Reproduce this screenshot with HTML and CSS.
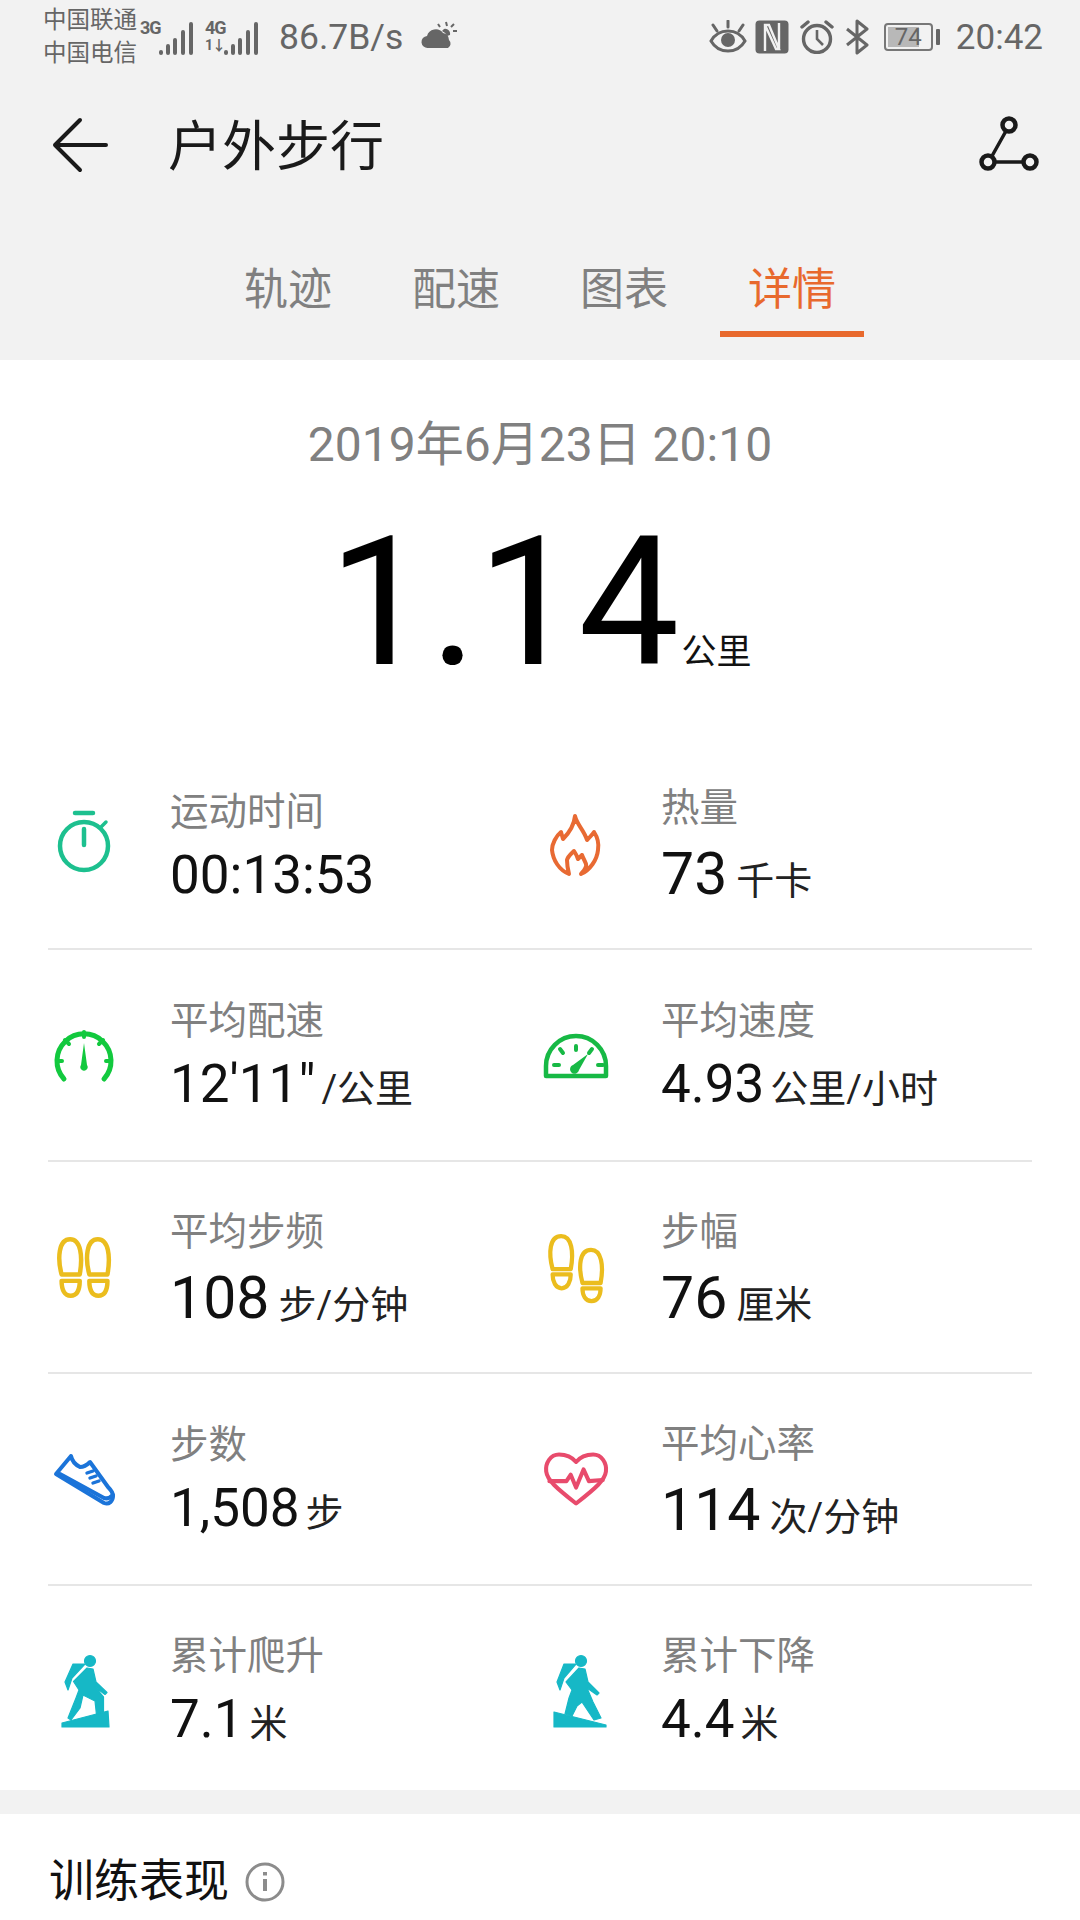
FILE: index.html
```html
<!DOCTYPE html>
<html lang="zh-CN">
<head>
    <meta charset="UTF-8">
    <meta name="viewport" content="width=device-width, initial-scale=1.0">
    <title>户外步行</title>
    <link rel="stylesheet" href="styles.css">
</head>
<body>

<div class="app">
    <div class="header">
        <div class="statusbar">
            <div class="status-left">
                <div class="carriers">
                    <span>中国联通</span>
                    <span>中国电信</span>
                </div>
                <div class="net net-3g">
                    <span class="net-label">3G</span>
                </div>
                <svg class="signal" width="36" height="36" viewBox="0 0 36 36" fill="none" stroke="#666" stroke-width="4" stroke-linecap="round">
                    <path d="M3 31v1M10 25v7M17 19v13M25 11v21M33 3v29"/>
                </svg>
                <div class="net net-4g">
                    <span class="net-label">4G</span>
                    <span class="net-label net-sub">1↓</span>
                </div>
                <svg class="signal" width="36" height="36" viewBox="0 0 36 36" fill="none" stroke="#666" stroke-width="4" stroke-linecap="round">
                    <path d="M3 31v1M10 25v7M17 19v13M25 11v21M33 3v29"/>
                </svg>
                <span class="speed">86.7B/s</span>
                <svg class="weather" width="36" height="32" viewBox="0 0 36 32">
                    <path d="M7 27a6 6 0 0 1-1-12 9 9 0 0 1 16-3 7 7 0 0 1 6 7 5 5 0 0 1-1 8z" fill="#666"/>
                    <path d="M23 8a5 5 0 0 1 6 6l-3 1a8 8 0 0 0-5-5z" fill="#666"/>
                    <path d="M25 1l1 4M33 3l-3 3M36 10h-4M17 3l2 3" stroke="#666" stroke-width="2" fill="none"/>
                </svg>
            </div>
            <div class="status-right">
                <svg class="eye" width="38" height="34" viewBox="0 0 38 34" fill="none" stroke="#666">
                    <path d="M2 21c4-7 10-10 17-10s13 3 17 10c-4 7-10 10-17 10S6 28 2 21z" stroke-width="3"/>
                    <circle cx="19" cy="20" r="7" fill="#666" stroke="none"/>
                    <path d="M19 1v6M4 5l4 6M34 5l-4 6" stroke-width="3" stroke-linecap="round"/>
                </svg>
                <svg width="34" height="34" viewBox="0 0 34 34">
                    <rect x="0.5" y="0.5" width="33" height="33" rx="4" fill="#666"/>
                    <path d="M10 31V5h4l10 24h-3L10 5M24 3v26" fill="none" stroke="#f2f2f2" stroke-width="2.4"/>
                </svg>
                <svg width="34" height="34" viewBox="0 0 34 34" fill="none" stroke="#666" stroke-width="3.4">
                    <circle cx="17" cy="19" r="13.5"/>
                    <path d="M17 10v9l6 6" stroke-width="2.6"/>
                    <path d="M2 7l6-5M32 7l-6-5" stroke-linecap="round"/>
                </svg>
                <svg width="24" height="36" viewBox="0 0 24 36" fill="none" stroke="#666" stroke-width="3" stroke-linejoin="round">
                    <path d="M2 10l20 16-10 8V2l10 8L2 26"/>
                </svg>
                <div class="battery">
                    <div class="battery-body">74</div>
                    <div class="battery-cap"></div>
                </div>
                <span class="clock">20:42</span>
            </div>
        </div>

        <div class="toolbar">
            <svg class="back" width="56" height="56" viewBox="0 0 56 56" fill="none" stroke="#1a1a1a" stroke-width="4" stroke-linecap="round" stroke-linejoin="round">
                <path d="M28 3L3 28l25 25M3 28h51"/>
            </svg>
            <h1 class="title">户外步行</h1>
            <svg class="route" width="62" height="58" viewBox="0 0 62 58" fill="none" stroke="#1a1a1a" stroke-width="4.5">
                <circle cx="30" cy="9" r="6.5"/>
                <circle cx="9" cy="46" r="6.5"/>
                <circle cx="51" cy="46" r="6.5"/>
                <path d="M27 15L13 40M16 46h28" stroke-width="3.5"/>
            </svg>
        </div>

        <div class="tabs">
            <div class="tab">轨迹</div>
            <div class="tab">配速</div>
            <div class="tab">图表</div>
            <div class="tab active">详情</div>
        </div>
    </div>

    <div class="summary">
        <div class="date">2019年6月23日 20:10</div>
        <div class="distance">
            <span class="distance-num">1.14</span>
            <span class="distance-unit">公里</span>
        </div>
    </div>

    <div class="metrics">
        <div class="row">
            <div class="cell">
                <svg class="icon" viewBox="-1 -2 80 80" fill="none" stroke="#1dc08f" stroke-width="4.5">
                    <circle cx="39" cy="41" r="24"/>
                    <path d="M30 8h18M39 24v16" stroke-linecap="round"/>
                    <path d="M56 22l5-5" stroke-linecap="round" stroke-width="3.5"/>
                </svg>
                <div class="text">
                    <div class="label">运动时间</div>
                    <div class="value">00:13:53</div>
                </div>
            </div>
            <div class="cell">
                <svg class="icon" viewBox="1 -3 80 80" fill="none" stroke="#e86a33" stroke-width="4" stroke-linejoin="round">
                    <path d="M41 10C43 19 50 24 53 34C56 31 58 29 60 26C64 32 65 38 64 44C63 54 56 64 47 68C51 63 53 61 52 58C51 55 49 52 48 49L44 53C43 50 42 48 40 45C37 48 34 50 33 54C33 60 34 64 35 68C25 64 19 54 18 44C18 38 22 30 27 26L29 33C34 28 40 20 41 10Z"/>
                </svg>
                <div class="text">
                    <div class="label">热量</div>
                    <div class="value value-lg">73<span class="unit">千卡</span></div>
                </div>
            </div>
        </div>

        <div class="row">
            <div class="cell">
                <svg class="icon" viewBox="0 0 80 80" fill="none" stroke="#12c93e" stroke-width="5" stroke-linecap="round">
                    <path d="M20 64A27 27 0 1 1 60 64"/>
                    <path d="M40 17v5M21 25l4 4M59 25l-4 4M13 46h5M62 46h5" stroke-width="4"/>
                    <path d="M40 28l-3 22a3.6 3.6 0 1 0 6 0z" fill="#12c93e" stroke="none"/>
                </svg>
                <div class="text">
                    <div class="label">平均配速</div>
                    <div class="value">12'11"<span class="unit">/公里</span></div>
                </div>
            </div>
            <div class="cell">
                <svg class="icon" viewBox="0 -1 80 80" fill="none" stroke="#17b945" stroke-width="4.5" stroke-linecap="round">
                    <path d="M11 60V50A30 30 0 0 1 71 50V60z" stroke-linejoin="round"/>
                    <path d="M41 30v4M25 33l3 4M57 33l-3 4M19 49h5M63 49h5" stroke-width="4"/>
                    <path d="M53 38L38 49a4.5 4.5 0 1 0 6 5z" fill="#17b945" stroke="none"/>
                </svg>
                <div class="text">
                    <div class="label">平均速度</div>
                    <div class="value">4.93<span class="unit">公里/小时</span></div>
                </div>
            </div>
        </div>

        <div class="row">
            <div class="cell">
                <svg class="icon" viewBox="2.5 2.5 75 75" fill="none" stroke="#ebbd1e" stroke-width="4.2" stroke-linejoin="round">
                    <path d="M19 47C15 32 16 14 27 14C37 14 39 30 36 47Z"/>
                    <path d="M19 53H36C36 62 33 67 27.5 67C22 67 19 62 19 53Z"/>
                    <path d="M45 47C41 32 42 14 53 14C63 14 65 30 62 47Z"/>
                    <path d="M45 53H62C62 62 59 67 53.5 67C48 67 45 62 45 53Z"/>
                </svg>
                <div class="text">
                    <div class="label">平均步频</div>
                    <div class="value value-lg">108<span class="unit">步/分钟</span></div>
                </div>
            </div>
            <div class="cell">
                <svg class="icon" viewBox="2.5 2.5 75 75" fill="none" stroke="#ebbd1e" stroke-width="4" stroke-linejoin="round">
                    <path d="M19 42C15 27 16 11 27 11C37 11 39 26 36 42Z"/>
                    <path d="M19 47H36C36 54 33 60 27.5 60C22 60 19 54 19 47Z"/>
                    <path d="M47 55C43 40 44 24 55 24C65 24 67 39 64 55Z"/>
                    <path d="M47 60H64C64 67 61 72 55.5 72C50 72 47 67 47 60Z"/>
                </svg>
                <div class="text">
                    <div class="label">步幅</div>
                    <div class="value value-lg">76<span class="unit">厘米</span></div>
                </div>
            </div>
        </div>

        <div class="row">
            <div class="cell">
                <svg class="icon" viewBox="0 0 80 80" fill="none" stroke="#1b74d9" stroke-width="4" stroke-linejoin="round" stroke-linecap="round">
                    <path d="M27 17L12 35L60 64C65 66 69 62 69 57C69 53 66 50 64 48L46 23C43 26 40 28 36 28C32 26 28 22 27 17Z"/>
                    <path d="M16 35L60 59C63 60 66 59 69 56"/>
                    <path d="M43 34l6-2M46 39l6-2M49 44l6-2" stroke-width="3.4"/>
                </svg>
                <div class="text">
                    <div class="label">步数</div>
                    <div class="value">1,508<span class="unit">步</span></div>
                </div>
            </div>
            <div class="cell">
                <svg class="icon" viewBox="2.5 2.5 75 75" fill="none" stroke="#e84b6c" stroke-width="3.8" stroke-linejoin="round" stroke-linecap="round">
                    <path d="M41 24C36 18 30 17 25 17C17 17 12 25 13 33C14 41 22 48 41 63C60 48 68 41 69 33C70 25 65 17 57 17C52 17 46 18 41 24Z"/>
                    <path d="M16 42H32L36 36L41 48L48 31L53 42L66 41"/>
                </svg>
                <div class="text">
                    <div class="label">平均心率</div>
                    <div class="value value-lg">114<span class="unit">次/分钟</span></div>
                </div>
            </div>
        </div>

        <div class="row">
            <div class="cell">
                <svg class="icon" viewBox="0 -2 80 80" fill="#16b8c6" stroke="#16b8c6" stroke-width="1.2" stroke-linejoin="round">
                    <circle cx="46" cy="9" r="5.5"/>
                    <path d="M29 12H41L28 26L24 38L21 30Z"/>
                    <path d="M43 16L49 17L52 30L63 40.5L61 42.5L51 35L59.5 45L59.5 60L52.5 63L51 49L39 43L36 56L27 68L24 66L32 46L35 38L29.5 29.5Z"/>
                    <path d="M18 75V71L64 59L65 75Z"/>
                </svg>
                <div class="text">
                    <div class="label">累计爬升</div>
                    <div class="value">7.1<span class="unit">米</span></div>
                </div>
            </div>
            <div class="cell">
                <svg class="icon" viewBox="0 -2 80 80" fill="#16b8c6" stroke="#16b8c6" stroke-width="1.2" stroke-linejoin="round">
                    <circle cx="46" cy="9" r="5.5"/>
                    <path d="M29 12H41L29 26L25 38L22 30Z"/>
                    <path d="M44 16L50 17L53 30L64 41L62 43L52 36L58 50L66 66L59 68L47 50L42 54L37 64L30 62L34 46L37 38L31 30Z"/>
                    <path d="M19 60V75H71V73Z"/>
                </svg>
                <div class="text">
                    <div class="label">累计下降</div>
                    <div class="value">4.4<span class="unit">米</span></div>
                </div>
            </div>
        </div>
    </div>

    <div class="band"></div>

    <div class="section-title">
        <span>训练表现</span>
        <svg width="40" height="40" viewBox="0 0 40 40" fill="none" stroke="#8c8c8c" stroke-width="3">
            <circle cx="20" cy="20" r="18"/>
            <path d="M20 17v12" stroke-width="4"/>
            <path d="M20 10v3.5" stroke-width="4"/>
        </svg>
    </div>
</div>

</body>
</html>
```

FILE: styles.css
```css
* {
    box-sizing: border-box;
}
html,
body {
    margin: 0;
    padding: 0;
    background-color: #fff;
}
body {
    font-family: Roboto, "Noto Sans CJK SC", sans-serif;
    color: #111;
}
.app {
    width: 1080px;
    height: 1920px;
    overflow: hidden;
}
.header {
    background-color: #f2f2f2;
    height: 360px;
}

/* status bar */
.statusbar {
    height: 74px;
    padding: 0 37px 0 43px;
    display: flex;
    justify-content: space-between;
    align-items: center;
    color: #666;
}
.status-left,
.status-right {
    display: flex;
    align-items: center;
}
.status-right {
    gap: 11px;
}
.carriers {
    display: flex;
    flex-direction: column;
    font-size: 23.5px;
    line-height: 33px;
    margin-right: 3px;
}
.net {
    display: flex;
    flex-direction: column;
    align-self: flex-start;
    margin-top: 14px;
}
.net-label {
    font-size: 18px;
    line-height: 20px;
    font-weight: 700;
    letter-spacing: -1px;
}
.net-sub {
    font-size: 14px;
    line-height: 15px;
}
.net-3g {
    width: 18px;
}
.net-4g {
    width: 18px;
    margin-left: 11px;
}
.signal {
    margin-top: 4px;
}
.speed {
    font-size: 35.5px;
    margin-left: 20px;
}
.weather {
    margin-left: 18px;
}
.eye {
    margin-right: -3px;
}
.battery {
    display: flex;
    align-items: center;
    gap: 3px;
    margin-left: 4px;
}
.battery-body {
    width: 49px;
    height: 28px;
    border: 2px solid #777;
    border-radius: 4px;
    background: linear-gradient(90deg, #b8b8b8 74%, transparent 74%);
    background-clip: content-box;
    padding: 2px;
    font-size: 24px;
    line-height: 20px;
    text-align: center;
}
.battery-cap {
    width: 4px;
    height: 16px;
    background-color: #666;
    border-radius: 1px;
}
.clock {
    font-size: 35px;
    margin-left: 5px;
}

/* title row */
.toolbar {
    height: 142px;
    padding: 0 39px 0 52px;
    display: flex;
    align-items: center;
}
.title {
    margin: -5px 0 0 60px;
    flex: 1;
    font-size: 54px;
    font-weight: 400;
    color: #1a1a1a;
}

/* tabs */
.tabs {
    display: flex;
    justify-content: center;
    gap: 24px;
    padding-top: 30px;
}
.tab {
    width: 144px;
    height: 91px;
    font-size: 44px;
    line-height: 88px;
    text-align: center;
    color: #808080;
}
.tab.active {
    color: #e8692d;
    border-bottom: 6px solid #e8692d;
}

/* date and distance */
.summary {
    height: 378px;
    padding-top: 55px;
    display: flex;
    flex-direction: column;
    align-items: center;
}
.date {
    font-size: 48px;
    line-height: 60px;
    color: #808080;
}
.distance {
    display: flex;
    align-items: baseline;
    margin-top: 33px;
}
.distance-num {
    font-size: 180px;
    line-height: 190px;
    color: #000;
}
.distance-unit {
    font-size: 35px;
    margin-left: 2px;
}

/* metrics grid */
.metrics {
    padding: 0 48px;
}
.row {
    display: grid;
    grid-template-columns: 491px 493px;
    height: 212px;
    border-bottom: 2px solid #e6e6e6;
}
.row:last-child {
    height: 204px;
    border-bottom: none;
    padding-top: 4px;
}
.cell {
    display: flex;
    align-items: center;
}
.icon {
    width: 80px;
    height: 80px;
    margin-left: -4px;
    flex-shrink: 0;
}
.text {
    margin-left: 46px;
    margin-top: 3px;
}
.label {
    font-size: 38.5px;
    line-height: 60px;
    color: #808080;
}
.value {
    font-size: 53px;
    line-height: 66px;
    color: #111;
    white-space: nowrap;
}
.value-lg {
    font-size: 59px;
    padding-top: 3px;
    margin-bottom: -3px;
}
.unit {
    font-size: 38px;
    margin-left: 6px;
    color: #222;
}
.value-lg .unit {
    margin-left: 9px;
}

/* gray band and next section */
.band {
    height: 24px;
    background-color: #f2f2f2;
}
.section-title {
    display: flex;
    align-items: center;
    gap: 16px;
    padding: 38px 0 0 49px;
    font-size: 45px;
    line-height: 60px;
    color: #111;
}
```
